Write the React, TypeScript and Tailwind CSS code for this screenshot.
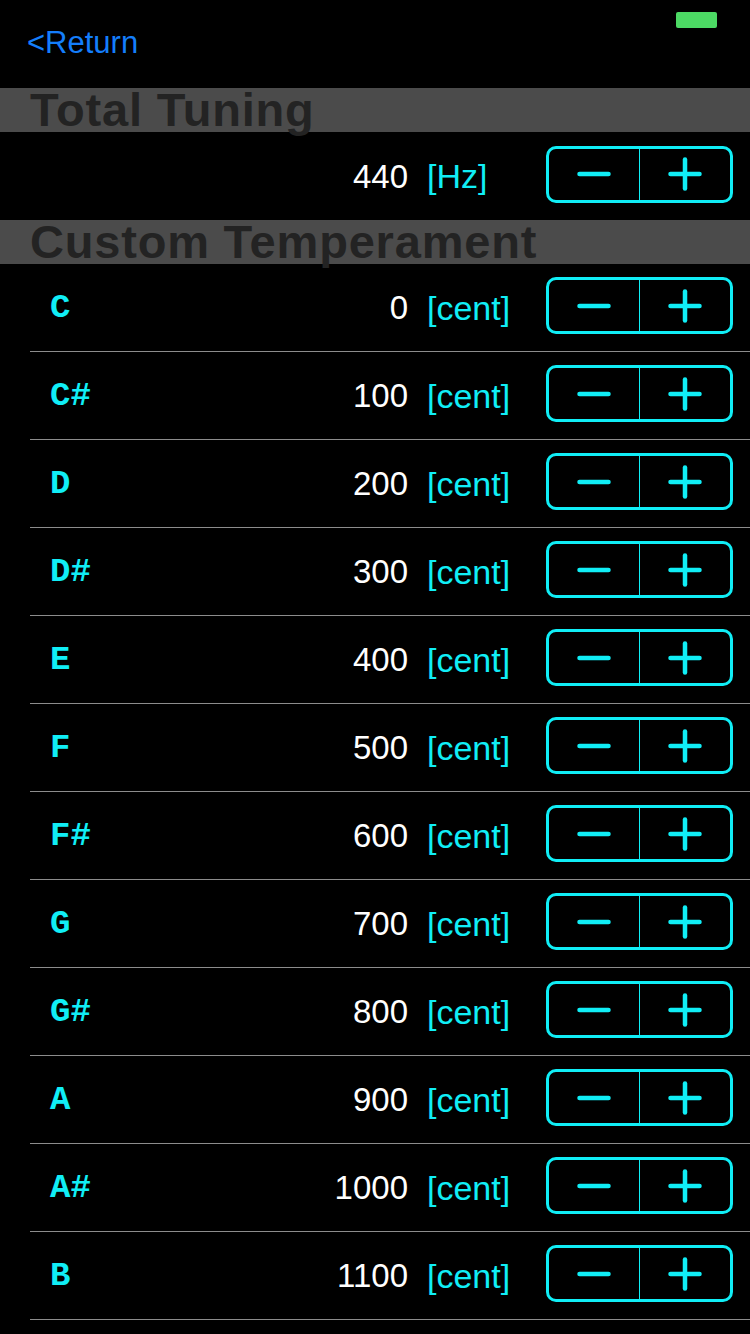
import React from "react";

const notes = [
  { name: "C", value: 0 },
  { name: "C#", value: 100 },
  { name: "D", value: 200 },
  { name: "D#", value: 300 },
  { name: "E", value: 400 },
  { name: "F", value: 500 },
  { name: "F#", value: 600 },
  { name: "G", value: 700 },
  { name: "G#", value: 800 },
  { name: "A", value: 900 },
  { name: "A#", value: 1000 },
  { name: "B", value: 1100 },
];

function Stepper() {
  return (
    <div className="flex h-[57px] w-[187px] shrink-0 rounded-[10px] border-[3px] border-[#10eef6] mr-[17px] mb-[4px]">
      <div className="flex flex-1 items-center justify-center border-r-[1.5px] border-[#10eef6]">
        <svg width="34" height="6" viewBox="0 0 34 6">
          <line x1="2.5" y1="3" x2="31.5" y2="3" stroke="#10eef6" strokeWidth="4.5" strokeLinecap="round" />
        </svg>
      </div>
      <div className="flex flex-1 items-center justify-center">
        <svg width="34" height="34" viewBox="0 0 34 34">
          <line x1="2.5" y1="17" x2="31.5" y2="17" stroke="#10eef6" strokeWidth="4.5" strokeLinecap="round" />
          <line x1="17" y1="2.5" x2="17" y2="31.5" stroke="#10eef6" strokeWidth="4.5" strokeLinecap="round" />
        </svg>
      </div>
    </div>
  );
}

function Row({ label, value, unit, border }: { label?: string; value: number; unit: string; border?: boolean }) {
  return (
    <div className={border ? "ml-[30px] flex h-[88px] items-center border-b border-[#8c8c8c]" : "ml-[30px] flex h-[88px] items-center"}>
      <div className="shrink-0 pl-[20px] font-['Liberation_Mono',monospace] text-[34px] font-bold leading-none text-[#10eef6]">
        {label}
      </div>
      <div className="flex-1 text-right font-['Liberation_Sans',sans-serif] text-[33px] leading-none text-white">
        {value}
      </div>
      <div className="ml-[19px] w-[119px] shrink-0 font-['Liberation_Sans',sans-serif] text-[34px] leading-none text-[#10eef6]">
        {unit}
      </div>
      <Stepper />
    </div>
  );
}

function SectionHeader({ title }: { title: string }) {
  return (
    <div className="h-[44px] bg-[#4b4b4b] pl-[30px] font-['Liberation_Sans',sans-serif] text-[47px] font-bold leading-[44px] tracking-[0.8px] text-[#232323] whitespace-nowrap">
      {title}
    </div>
  );
}

export default function App() {
  return (
    <div className="h-[1334px] w-[750px] overflow-hidden bg-black font-['Liberation_Sans',sans-serif]">
      {/* status + nav */}
      <div className="h-[88px]">
        <div className="flex h-[28px] justify-end pr-[33px] pt-[12px]">
          <div className="h-[16px] w-[41px] rounded-[2px] bg-[#4cd964]" />
        </div>
        <div className="pl-[27px] text-[31px] leading-[30px] text-[#147efb]">&lt;Return</div>
      </div>

      <SectionHeader title="Total Tuning" />
      <Row value={440} unit="[Hz]" />

      <SectionHeader title="Custom Temperament" />
      {notes.map((n) => (
        <Row key={n.name} label={n.name} value={n.value} unit="[cent]" border />
      ))}
    </div>
  );
}
